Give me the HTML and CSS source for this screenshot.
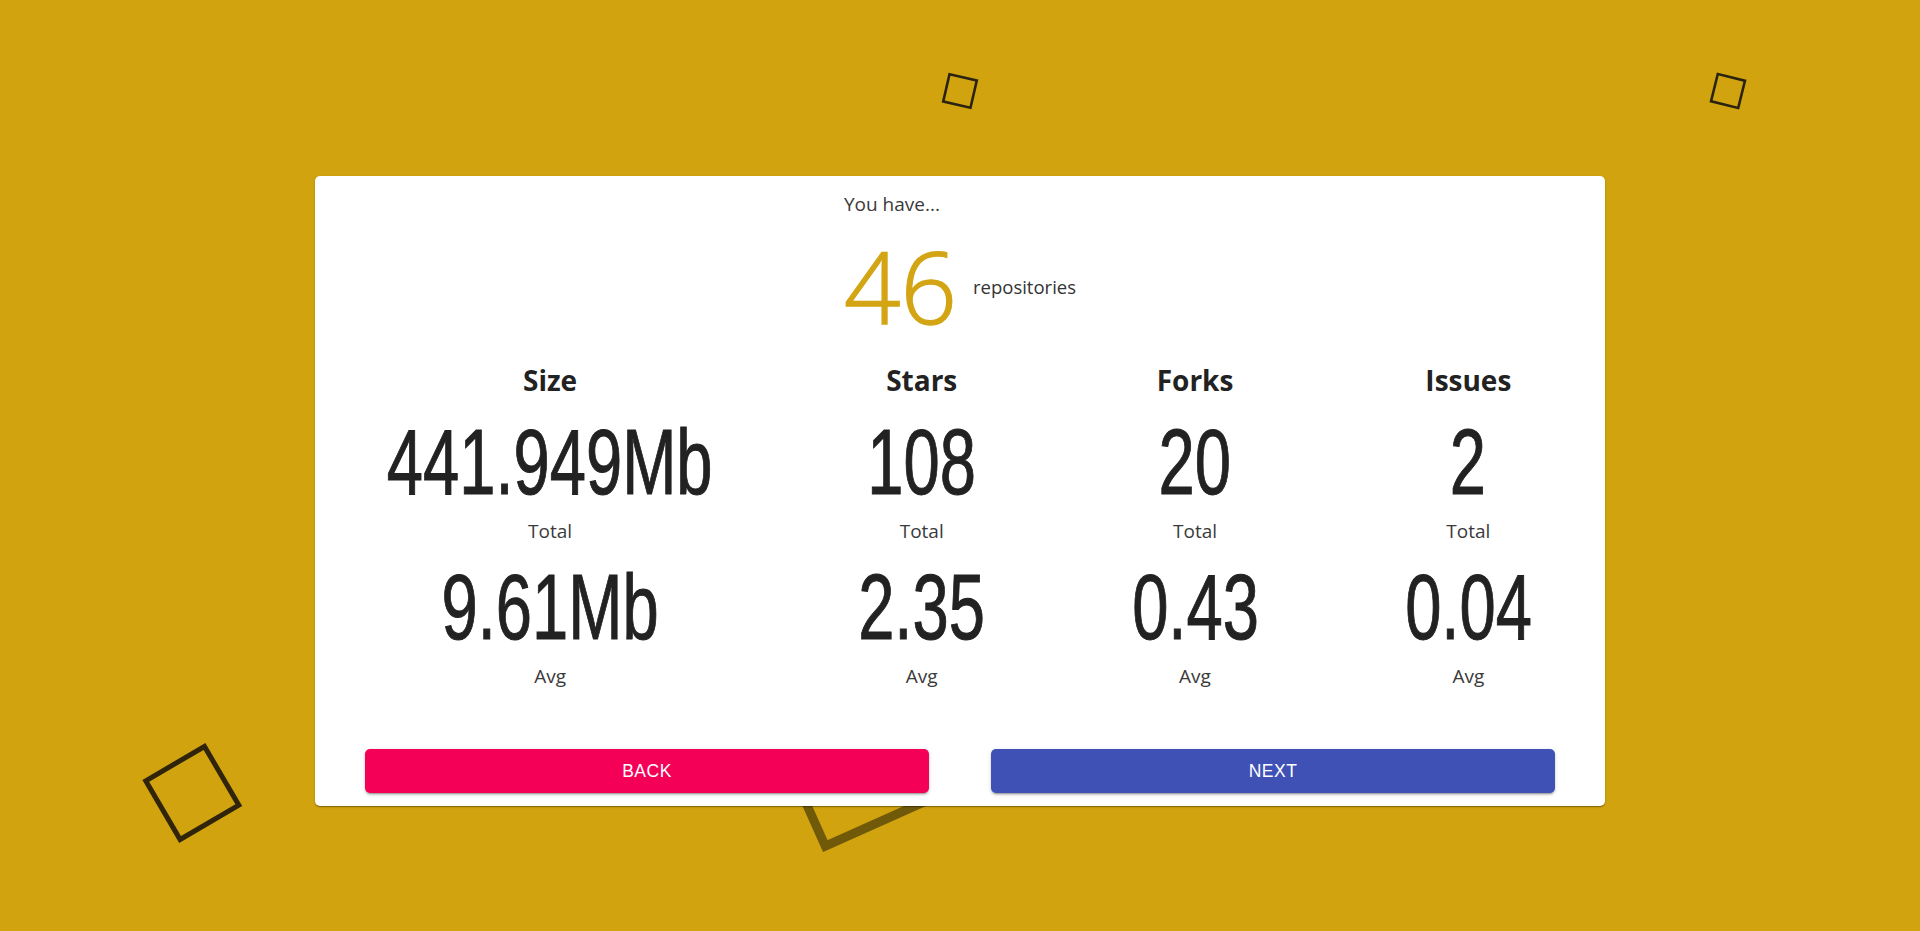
FILE: index.html
```html
<!DOCTYPE html>
<html lang="en">
<head>
<meta charset="utf-8">
<title>Repositories summary</title>
<link rel="stylesheet" href="styles.css">
</head>
<body>
<svg class="backdrop" width="1920" height="931" viewBox="0 0 1920 931" aria-hidden="true">
  <rect class="sq-small" x="946" y="77" width="28" height="28" transform="rotate(13 960 91)"/>
  <rect class="sq-small" x="1714" y="77" width="28" height="28" transform="rotate(14 1728 91)"/>
  <rect class="sq-big" x="158.3" y="759" width="68" height="68" transform="rotate(-30.3 192.3 793)"/>
  <polygon class="sq-shadow" points="825.3,846.1 1007.9,764.4 926.2,581.8 743.6,663.5"/>
</svg>

<main class="page">
  <section class="card">
    <div class="intro">
      <div class="intro-line">You have...</div>
      <div class="repo-row">
        <span class="repo-count">46</span>
        <span class="repo-label">repositories</span>
      </div>
    </div>

    <div class="stats">
      <div class="stat">
        <div class="stat-title">Size</div>
        <div class="stat-value"><span>441.949Mb</span></div>
        <div class="stat-label">Total</div>
        <div class="stat-value second"><span>9.61Mb</span></div>
        <div class="stat-label">Avg</div>
      </div>
      <div class="stat">
        <div class="stat-title">Stars</div>
        <div class="stat-value"><span>108</span></div>
        <div class="stat-label">Total</div>
        <div class="stat-value second"><span>2.35</span></div>
        <div class="stat-label">Avg</div>
      </div>
      <div class="stat">
        <div class="stat-title">Forks</div>
        <div class="stat-value"><span>20</span></div>
        <div class="stat-label">Total</div>
        <div class="stat-value second"><span>0.43</span></div>
        <div class="stat-label">Avg</div>
      </div>
      <div class="stat">
        <div class="stat-title">Issues</div>
        <div class="stat-value"><span>2</span></div>
        <div class="stat-label">Total</div>
        <div class="stat-value second"><span>0.04</span></div>
        <div class="stat-label">Avg</div>
      </div>
    </div>

    <div class="actions">
      <button class="btn btn-back" type="button">Back</button>
      <button class="btn btn-next" type="button">Next</button>
    </div>
  </section>
</main>
</body>
</html>
```

FILE: styles.css
```css
html, body {
  margin: 0;
  padding: 0;
}

body {
  background: #d0a30f;
  font-family: "Open Sans", "Noto Sans", sans-serif;
  color: #333;
  width: 1920px;
  height: 931px;
  overflow: hidden;
  position: relative;
}

.backdrop {
  position: absolute;
  top: 0;
  left: 0;
  z-index: 0;
}

.sq-small {
  fill: none;
  stroke: #2a2312;
  stroke-width: 2.6;
}

.sq-big {
  fill: none;
  stroke: #30250b;
  stroke-width: 5;
}

.sq-shadow {
  fill: none;
  stroke: #705a0a;
  stroke-width: 9;
}

.page {
  padding-top: 176px;
}

.card {
  position: relative;
  z-index: 1;
  width: 1290px;
  margin: 0 auto;
  background: #fff;
  border-radius: 5px;
  padding: 13px 0 13px;
  box-shadow: 0 2px 1px -1px rgba(0,0,0,0.2), 0 1px 1px 0 rgba(0,0,0,0.14), 0 1px 3px 0 rgba(0,0,0,0.12);
  display: flex;
  flex-direction: column;
}

.intro {
  align-self: center;
  display: flex;
  flex-direction: column;
  align-items: flex-start;
}

.intro-line {
  font-size: 19px;
  line-height: 30px;
  color: #3a3a3a;
}

.repo-row {
  margin-top: 16px;
  display: flex;
  align-items: center;
  gap: 16px;
}

.repo-count {
  font-size: 99px;
  line-height: 101px;
  font-weight: 300;
  color: #d3a514;
  -webkit-text-stroke: 1.4px #d3a514;
}

.repo-label {
  font-size: 18.5px;
  line-height: 30px;
  padding-top: 3px;
  color: #333;
}

.stats {
  margin-top: 25px;
  display: grid;
  grid-template-columns: 1.72fr 1fr 1fr 1fr;
}

.stat {
  display: flex;
  flex-direction: column;
  align-items: center;
}

.stat-title {
  font-size: 28px;
  line-height: 38px;
  font-weight: 700;
  color: #222;
}

.stat-value {
  margin-top: 16px;
  height: 94px;
  font-family: "Liberation Sans", Arial, sans-serif;
  font-size: 93px;
  line-height: 94px;
  color: #222;
  -webkit-text-stroke: 1px #222;
}

.stat-value span {
  display: inline-block;
  transform: scaleX(0.7);
}

.stat-value.second {
  margin-top: 14px;
}

.stat-label {
  margin-top: 7px;
  font-size: 19px;
  line-height: 30px;
  color: #3a3a3a;
}

.actions {
  margin-top: 58px;
  padding: 0 50px;
  display: flex;
  gap: 62px;
}

.btn {
  flex: 1;
  height: 44px;
  border: none;
  border-radius: 5px;
  color: #fff;
  font-family: "Liberation Sans", Arial, sans-serif;
  font-weight: 400;
  font-size: 17.5px;
  letter-spacing: 0.5px;
  text-transform: uppercase;
  box-shadow: 0 3px 1px -2px rgba(0,0,0,0.2), 0 2px 2px 0 rgba(0,0,0,0.14), 0 1px 5px 0 rgba(0,0,0,0.12);
  cursor: pointer;
}

.btn-back {
  background: #f50057;
}

.btn-next {
  background: #3f51b5;
}
```
